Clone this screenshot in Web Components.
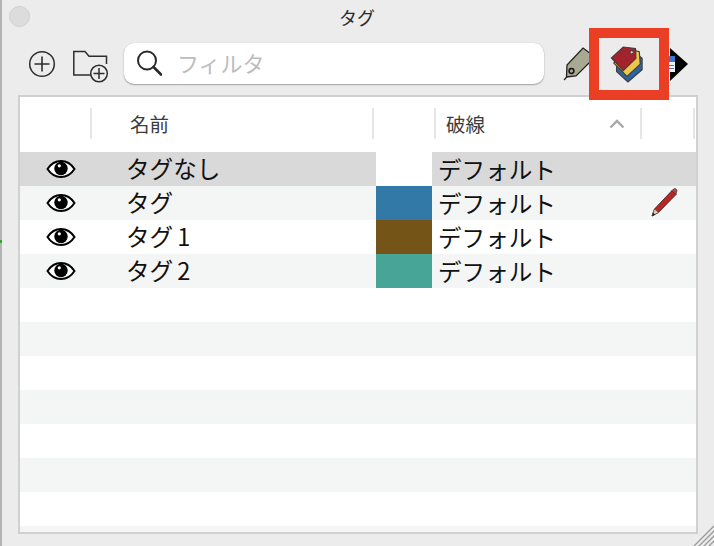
<!DOCTYPE html>
<html lang="ja"><head><meta charset="utf-8"><title>タグ</title>
<style>html,body{margin:0;height:100%;overflow:hidden;background:#ececec;font-family:"Noto Sans CJK JP","Noto Sans",sans-serif}</style>
</head><body>
<tag-window>
  <tool-bar slot="toolbar"></tool-bar>
  <tag-table slot="table">
    <tag-row name="タグなし" color="#ffffff" sel></tag-row>
    <tag-row name="タグ" color="#3379a8" edit></tag-row>
    <tag-row name="タグ1" color="#745417"></tag-row>
    <tag-row name="タグ2" color="#47a598"></tag-row>
    <tag-row></tag-row><tag-row></tag-row><tag-row></tag-row><tag-row></tag-row><tag-row></tag-row><tag-row></tag-row><tag-row></tag-row><tag-row></tag-row>
  </tag-table>
</tag-window>
<script>
const EYE=`<svg width="30" height="20" viewBox="0 0 30 20"><path d="M1.500 10C5 4.600 9.500 2 15 2s10 2.600 13.500 8C25 15.400 20.500 18 15 18S5 15.400 1.500 10Z" fill="#fff" stroke="#000" stroke-width="2"/><circle cx="15" cy="9.500" r="6.700" fill="#000"/><circle cx="13.300" cy="6.800" r="1.600" fill="#fff"/></svg>`;
const PENCIL=`<svg width="30" height="32" viewBox="0 0 30 32"><path d="M4 29 6.500 22 24 3.500l4 4L10.500 25.500Z" fill="#b82626" stroke="#3a1c1c" stroke-width=".8"/><path d="M4 29 6.500 22l4 3.500Z" fill="#e6cfa8" stroke="#444" stroke-width=".6"/><path d="M4 29l1-3.400 2.300 2.200Z" fill="#222"/><path d="M24 3.500 25.500 2c1-.9 2-.7 2.800.2s1 2 .2 2.800L28 7.500Z" fill="#a84a4a" stroke="#3a1c1c" stroke-width=".6"/></svg>`;
class TagWindow extends HTMLElement{constructor(){super();this.attachShadow({mode:'open'}).innerHTML=`<style>
:host{display:flex;flex-direction:column;position:relative;width:714px;height:546px;box-sizing:border-box;border-left:2px solid #b4b4b4;background:#ececec}
.title{height:33px;flex:none;display:flex;align-items:center;justify-content:center;position:relative;font-size:18px;color:#2a2a2a;padding-right:2px}
.light{position:absolute;left:7px;top:6px;width:21px;height:21px;border-radius:50%;background:#dcdcdc;border:1px solid #cfcfcf;box-sizing:border-box}
.tb{height:62px;flex:none}
.tbl{flex:none;margin-left:16px;width:680px}
.grip{position:absolute;right:0;bottom:0}
.dot{position:absolute;left:-2px;top:240px;width:2px;height:3px;background:#3aa52e}
</style>
<div class="dot"></div>
<div class="title"><span class="light"></span>タグ</div>
<div class="tb"><slot name="toolbar"></slot></div>
<div class="tbl"><slot name="table"></slot></div>
<svg class="grip" width="22" height="22" viewBox="0 0 22 22"><path d="M1 23 23 1M6 23 23 6M11 23 23 11M16 23 23 16" stroke="#9a9a9a" stroke-width="1.300"/></svg>`}}
class ToolBar extends HTMLElement{constructor(){super();this.attachShadow({mode:'open'}).innerHTML=`<style>
:host{display:block;height:62px;position:relative;padding:0 0 0 26px;box-sizing:border-box}
svg{display:block;flex:none}
.row{display:flex;align-items:center;height:62px}
.folder{margin-top:5px}
.search{width:420px;height:41px;box-sizing:border-box;margin:-2px 19px 0 14px;background:#fff;border-radius:10px;box-shadow:0 1px 1.500px rgba(0,0,0,.3),0 0 1px rgba(0,0,0,.2);display:flex;align-items:center;padding-left:12px;gap:15px;font-size:22px;color:#bdbdbd}
.search span{margin-top:-3px}
.mark{position:absolute;left:587px;top:-5px;width:80px;height:72px;box-sizing:border-box;border:10px solid #ea3f24}
.next{position:absolute;left:660px;top:15px}
.ico{position:absolute;left:608px;top:13px}
</style>
<div class="row">
<svg width="28" height="28" viewBox="0 0 28 28" style="margin-right:16px"><circle cx="14" cy="14" r="12.300" fill="none" stroke="#2d2d2d" stroke-width="1.500"/><path d="M14 6.500v15M6.500 14h15" stroke="#2d2d2d" stroke-width="1.600"/></svg>
<svg class="folder" width="38" height="34" viewBox="0 0 38 34"><path d="M27 25H1.800V1.500H13l4 4.800h17.500V14" fill="none" stroke="#2d2d2d" stroke-width="1.500"/><circle cx="27" cy="23.500" r="8.300" fill="#ececec" stroke="#2d2d2d" stroke-width="1.500"/><path d="M27 18v11M21.500 23.500h11" stroke="#2d2d2d" stroke-width="1.500"/></svg>
<div class="search"><svg width="26" height="28" viewBox="0 0 26 28"><circle cx="11" cy="11.500" r="9" fill="none" stroke="#2a2a2a" stroke-width="2"/><path d="M17.500 18 25 25.500" stroke="#2a2a2a" stroke-width="2.600" stroke-linecap="round"/></svg><span>フィルタ</span></div>
<svg width="32" height="34" viewBox="0 0 32 34"><path d="M1 33 6.500 27" stroke="#222" stroke-width="1.200"/><path d="M20 1 32 10 13 29 3.500 30 4 18Z" fill="#a9a993" stroke="#222" stroke-width="1.300"/><circle cx="8.500" cy="24" r="2.400" fill="#a9a993" stroke="#111" stroke-width="1.500"/></svg>
</div>
<svg class="next" width="27" height="34" viewBox="0 0 27 34"><path d="M8 0 26 16 8 33Z" fill="#000"/><rect x="6" y="8" width="7" height="6" fill="#3a78d8"/><rect x="6" y="14" width="7" height="10" fill="#f2f2f2"/><path d="M7 17.500h5M7 20.500h5" stroke="#3a78d8"/></svg>
<svg class="ico" width="34" height="38" viewBox="0 0 36 40"><path d="M7 27 19 38 34 25 34 13 28 8 7 20Z" fill="#2e62a0" stroke="#3d3d3d" stroke-width="1.200"/><path d="M4 18 18 32 32 19 31 6 20 3Z" fill="#eec64a" stroke="#3d3d3d" stroke-width="1.200"/><path d="M1.500 12.500 14 1 27 2.500 27.500 13 14 26Z" fill="#a3232d" stroke="#3d3d3d" stroke-width="1.200"/><circle cx="23" cy="6.500" r="1.800" fill="#c8c8c8" stroke="#333"/></svg>
<div class="mark"></div>`}}
class TagTable extends HTMLElement{constructor(){super();this.attachShadow({mode:'open'}).innerHTML=`<style>
:host{display:block;height:439px;box-sizing:border-box;background:#fff;border:2px solid #d0d0d0;overflow:hidden}
.head{display:grid;grid-template-columns:70px 282px 62px 206px 53px 1fr;height:53px;box-sizing:border-box;padding-top:11px;font-size:19.500px;color:#3c3c3c;margin-bottom:2px}
.head>div{height:31px;line-height:31px;box-sizing:border-box;white-space:nowrap}
.head>div+div{border-left:2px solid #e6e6e6;padding-left:38px}
.head>div.d{padding-left:10px;display:flex;justify-content:space-between;padding-right:15px}
</style>
<div class="head"><div></div><div>名前</div><div></div><div class="d">破線<svg width="16" height="31" viewBox="0 0 16 31"><path d="M1.500 19.500 8 13l6.500 6.500" fill="none" stroke="#a8a8a8" stroke-width="2.400"/></svg></div><div></div><div></div></div>
<slot></slot>`}}
class TagRow extends HTMLElement{constructor(){super();const n=this.getAttribute('name');const c=this.getAttribute('color');const label=n?n.replace(/\d/,'<span class="num">$&</span>'):'';this.attachShadow({mode:'open'}).innerHTML=`<style>
:host{display:grid;grid-template-columns:81px 275px 56px 208px 1fr;height:34px;background:#fff;font-size:23.600px;color:#111;line-height:34px}
:host(:nth-child(even)){background:#f4f5f5}
:host([sel]){background:#d9d9d9}
.eye{display:flex;align-items:center;justify-content:center;height:34px}
.n{padding-left:25px;white-space:nowrap;line-height:32px}
.num{margin-left:4px}
.s{height:34px}
.l{padding-left:6px;white-space:nowrap}
.p{display:flex;align-items:center;height:34px;margin-left:8px}
svg{display:block}
</style>`+(n?`<div class="eye">${EYE}</div><div class="n">${label}</div><div class="s" style="background:${c}"></div><div class="l">デフォルト</div><div class="p">${this.hasAttribute('edit')?PENCIL:''}</div>`:'')}}
customElements.define('tag-window',TagWindow);
customElements.define('tool-bar',ToolBar);
customElements.define('tag-table',TagTable);
customElements.define('tag-row',TagRow);
</script>
</body></html>
